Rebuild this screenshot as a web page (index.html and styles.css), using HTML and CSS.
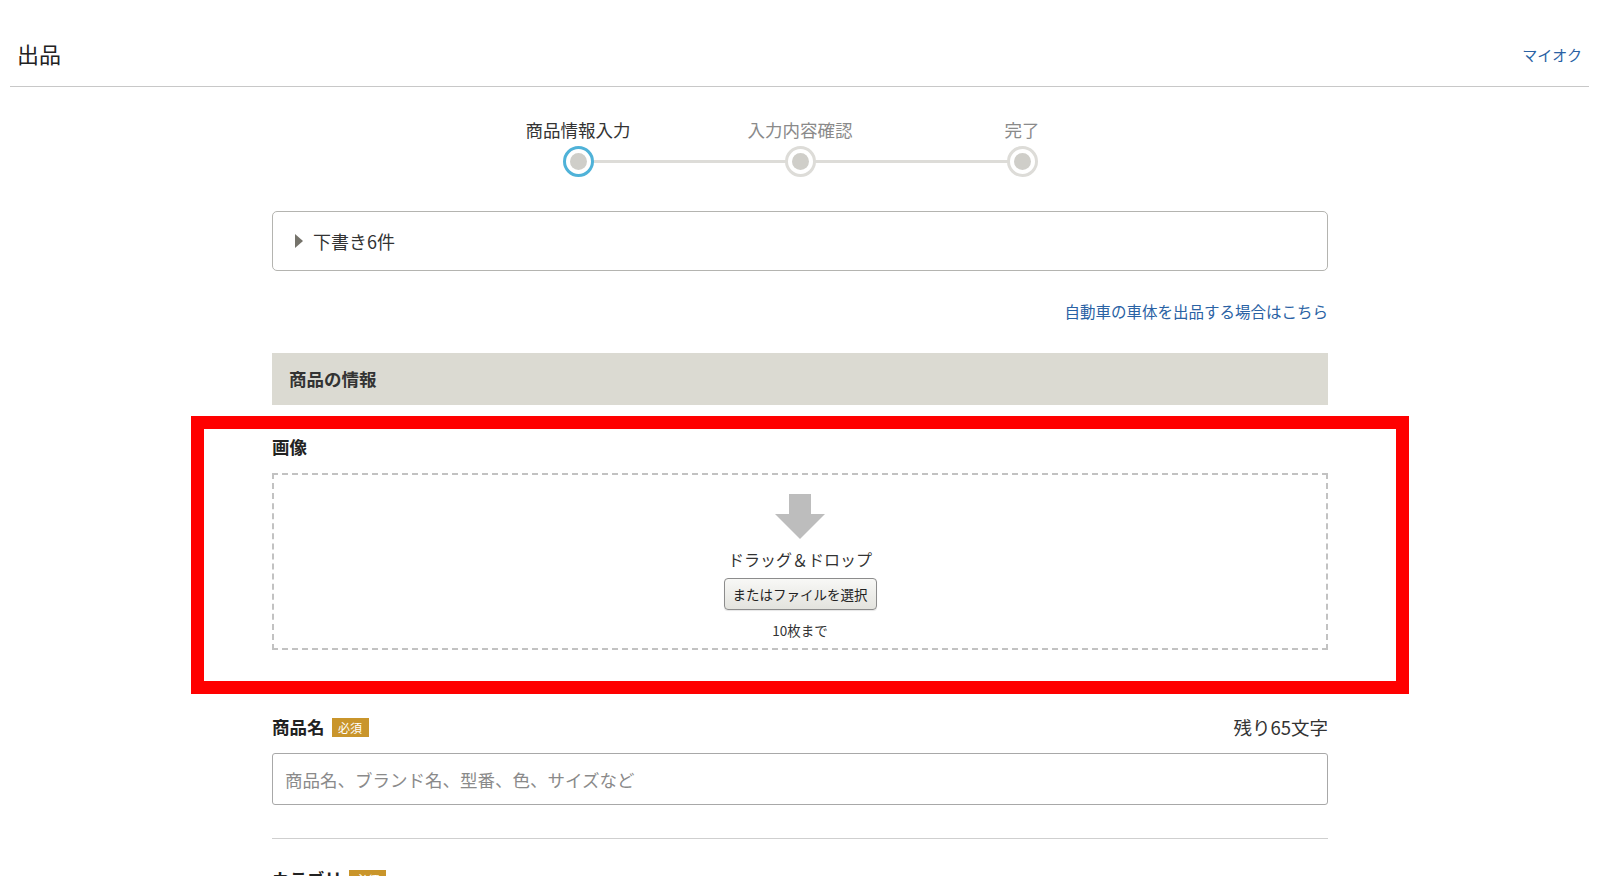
FILE: index.html
```html
<!DOCTYPE html>
<html lang="ja">
<head>
    <meta charset="UTF-8">
    <meta name="viewport" content="width=device-width, initial-scale=1.0">
    <title>出品 - 商品情報入力</title>
    <link rel="stylesheet" href="styles.css">
</head>
<body>
    <header class="page-header">
        <h1 class="page-title">出品</h1>
        <a class="myauc-link" href="#">マイオク</a>
    </header>

    <main class="content">
        <ol class="steps">
            <li class="step active">
                <span class="step-label">商品情報入力</span>
                <span class="step-dot"></span>
            </li>
            <li class="step">
                <span class="step-label">入力内容確認</span>
                <span class="step-dot"></span>
            </li>
            <li class="step">
                <span class="step-label">完了</span>
                <span class="step-dot"></span>
            </li>
        </ol>

        <div class="drafts">
            <span class="drafts-arrow"></span>
            <span>下書き6件</span>
        </div>

        <div class="car-link-row">
            <a class="car-link" href="#">自動車の車体を出品する場合はこちら</a>
        </div>

        <h2 class="section-title">商品の情報</h2>

        <section class="field image-field">
            <div class="field-label">画像</div>
            <div class="dropzone">
                <svg class="drop-arrow" width="50" height="46" viewBox="0 0 50 46">
                    <rect x="14" y="0" width="22" height="22" fill="#bdbdbd"/>
                    <polygon points="0,20 50,20 25,45" fill="#bdbdbd"/>
                </svg>
                <p class="drop-text">ドラッグ＆ドロップ</p>
                <button class="file-button" type="button">またはファイルを選択</button>
                <p class="drop-limit">10枚まで</p>
            </div>
            <div class="highlight-frame"></div>
        </section>

        <section class="field name-field">
            <div class="field-head">
                <div class="field-label">商品名<span class="required">必須</span></div>
                <div class="char-count">残り65文字</div>
            </div>
            <input class="text-input" type="text" placeholder="商品名、ブランド名、型番、色、サイズなど">
        </section>

        <hr class="divider">

        <section class="field category-field">
            <div class="field-label">カテゴリ<span class="required">必須</span></div>
        </section>
    </main>
</body>
</html>
```

FILE: styles.css
```css
* {
    margin: 0;
    padding: 0;
    box-sizing: border-box;
}

body {
    font-family: "Noto Sans CJK JP", "Noto Sans", sans-serif;
    color: #333;
    background: #fff;
    overflow: hidden;
}

a {
    text-decoration: none;
}

.page-header {
    margin: 0 11px 0 10px;
    padding: 37px 7px 17px 7px;
    border-bottom: 1px solid #c8c8c8;
    display: flex;
    justify-content: space-between;
    align-items: center;
}

.page-title {
    font-size: 22px;
    font-weight: normal;
    line-height: 32px;
    color: #222;
}

.myauc-link {
    font-size: 15px;
    color: #2a62a4;
    margin-top: 2px;
}

.content {
    width: 1056px;
    margin: 0 auto;
}

/* steps */
.steps {
    list-style: none;
    display: grid;
    grid-template-columns: repeat(3, 222px);
    justify-content: center;
    margin-top: 31px;
    position: relative;
}

.steps::before {
    content: "";
    position: absolute;
    left: calc(50% - 222px);
    right: calc(50% - 222px);
    bottom: 14px;
    height: 3px;
    background: #dddcd8;
}

.step {
    display: flex;
    flex-direction: column;
    align-items: center;
    gap: 4px;
    position: relative;
}

.step-label {
    font-size: 17.5px;
    line-height: 24px;
    color: #8a8a8a;
}

.step.active .step-label {
    color: #333;
}

.step-dot {
    width: 31px;
    height: 31px;
    border-radius: 50%;
    border: 3px solid #dddcd8;
    background: #fff;
    display: flex;
    align-items: center;
    justify-content: center;
}

.step-dot::after {
    content: "";
    width: 17px;
    height: 17px;
    border-radius: 50%;
    background: #cfcec9;
}

.step.active .step-dot {
    border-color: #4fb2d8;
}

/* drafts */
.drafts {
    margin-top: 34px;
    height: 60px;
    border: 1px solid #b4b4b0;
    border-radius: 5px;
    display: flex;
    align-items: center;
    padding-left: 22px;
    font-size: 18px;
    color: #333;
}

.drafts-arrow {
    width: 0;
    height: 0;
    border-top: 7px solid transparent;
    border-bottom: 7px solid transparent;
    border-left: 8px solid #75736b;
    margin-right: 10px;
}

.car-link-row {
    margin-top: 29px;
    text-align: right;
    line-height: 22px;
}

.car-link {
    font-size: 15.5px;
    color: #2a62a4;
}

.section-title {
    margin-top: 31px;
    height: 52px;
    background: #dbdad2;
    font-size: 17.5px;
    font-weight: bold;
    line-height: 52px;
    padding-left: 17px;
    color: #333;
}

/* fields */
.field {
    position: relative;
}

.field-label {
    font-size: 17.5px;
    font-weight: bold;
    line-height: 24px;
    color: #222;
    display: flex;
    align-items: center;
}

.image-field {
    margin-top: 30px;
}

.dropzone {
    margin-top: 14px;
    height: 177px;
    border: 2px dashed #c2c2c2;
    display: flex;
    flex-direction: column;
    align-items: center;
    padding-top: 19px;
}

.drop-text {
    margin-top: 8px;
    font-size: 16px;
    line-height: 22px;
    color: #333;
}

.file-button {
    margin-top: 8px;
    height: 32px;
    padding: 0 8px;
    font-family: inherit;
    font-size: 13.5px;
    color: #222;
    border: 1px solid #8c8c8c;
    border-radius: 4px;
    background: linear-gradient(#f8f8f6, #e3e3de);
    box-shadow: 0 1px 1px rgba(0,0,0,0.1);
}

.drop-limit {
    margin-top: 10px;
    font-size: 13.5px;
    line-height: 20px;
    color: #333;
}

.highlight-frame {
    position: absolute;
    top: -19px;
    left: -81px;
    right: -81px;
    bottom: -44px;
    border: 13px solid #ff0000;
    pointer-events: none;
}

.name-field {
    margin-top: 64px;
}

.field-head {
    display: flex;
    justify-content: space-between;
    align-items: center;
    line-height: 26px;
}

.required {
    display: inline-block;
    margin-left: 7px;
    padding: 0 6.5px;
    background: #c9952b;
    color: #fff;
    font-size: 12px;
    font-weight: normal;
    line-height: 19px;
}

.char-count {
    font-size: 18.5px;
    color: #333;
}

.text-input {
    display: block;
    width: 100%;
    margin-top: 13px;
    height: 52px;
    border: 1.5px solid #a8a8a8;
    border-radius: 3px;
    padding: 0 12px;
    font-family: inherit;
    font-size: 17.5px;
    color: #333;
}

.text-input::placeholder {
    color: #8a8a8a;
}

.divider {
    margin-top: 33px;
    border: none;
    border-top: 1px solid #cfcfcf;
}

.category-field {
    margin-top: 28px;
}
```
